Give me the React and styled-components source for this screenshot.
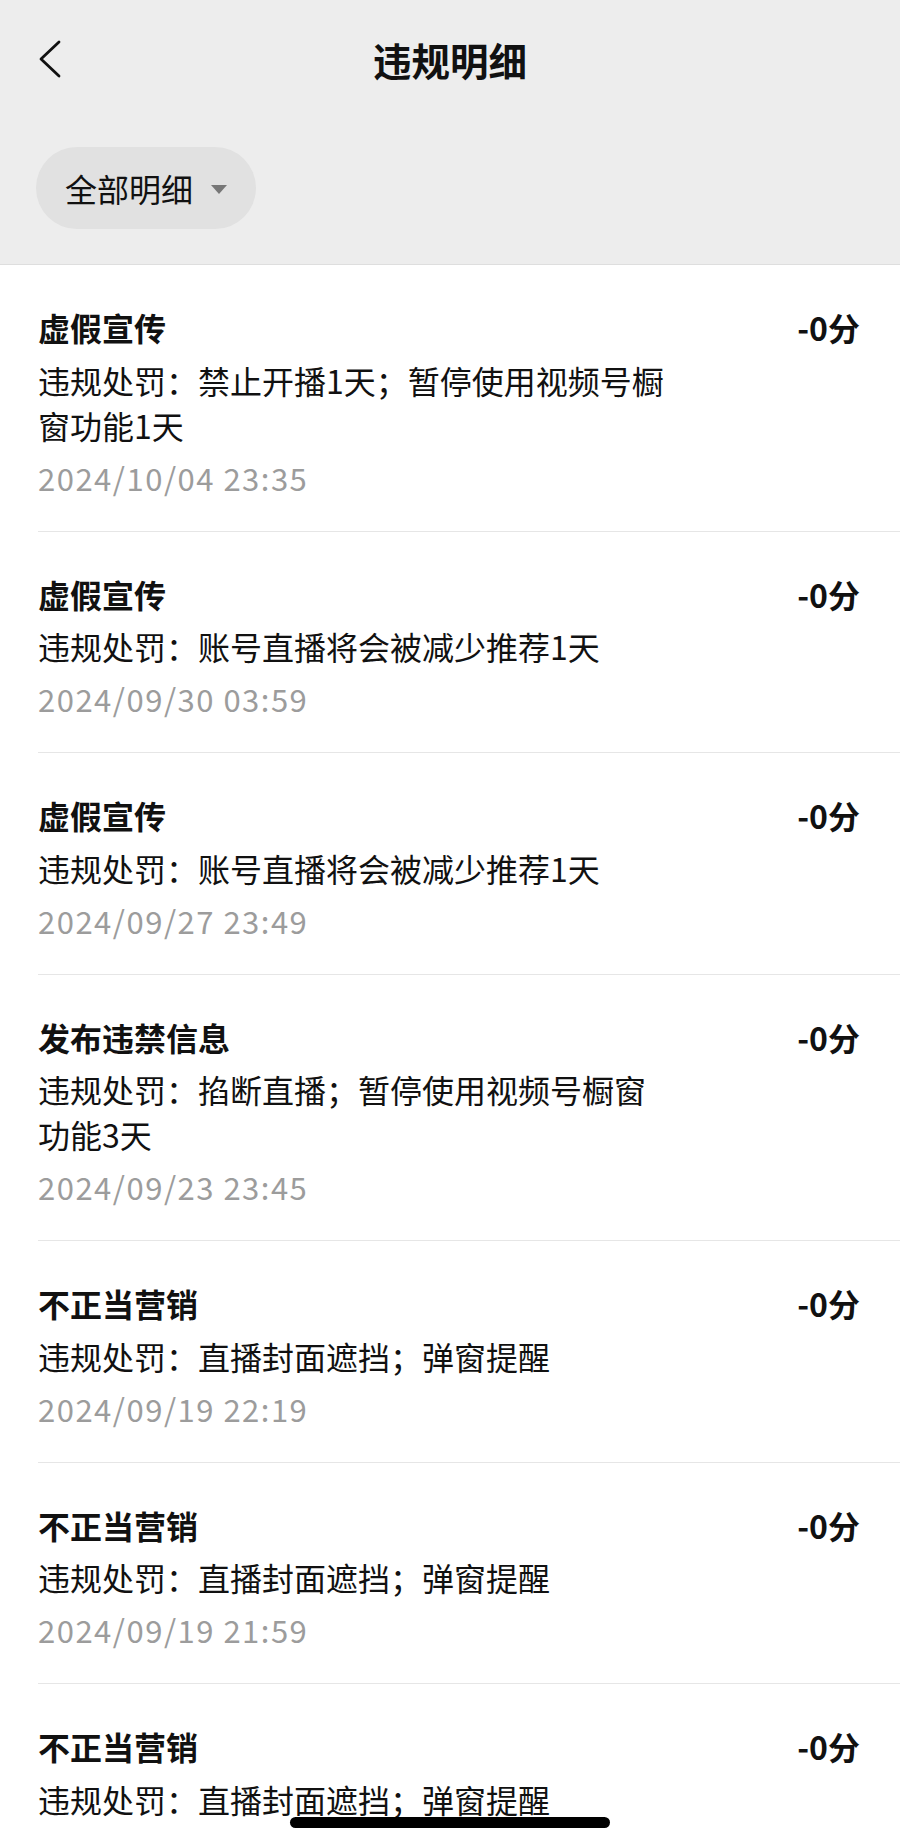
import React from "react";
import styled, { createGlobalStyle } from "styled-components";

const records = [
  {
    title: "虚假宣传",
    detail: "违规处罚：禁止开播1天；暂停使用视频号橱窗功能1天",
    time: "2024/10/04 23:35",
  },
  {
    title: "虚假宣传",
    detail: "违规处罚：账号直播将会被减少推荐1天",
    time: "2024/09/30 03:59",
  },
  {
    title: "虚假宣传",
    detail: "违规处罚：账号直播将会被减少推荐1天",
    time: "2024/09/27 23:49",
  },
  {
    title: "发布违禁信息",
    detail: "违规处罚：掐断直播；暂停使用视频号橱窗功能3天",
    time: "2024/09/23 23:45",
  },
  {
    title: "不正当营销",
    detail: "违规处罚：直播封面遮挡；弹窗提醒",
    time: "2024/09/19 22:19",
  },
  {
    title: "不正当营销",
    detail: "违规处罚：直播封面遮挡；弹窗提醒",
    time: "2024/09/19 21:59",
  },
  {
    title: "不正当营销",
    detail: "违规处罚：直播封面遮挡；弹窗提醒",
    time: "2024/09/19 21:40",
  },
];

const App = () => (
  <>
    <GlobalStyle />
    <Page>
      <Header>
        <NavBar>
          <BackButton aria-label="返回">
            <svg width="26" height="40" viewBox="0 0 26 40">
              <polyline
                points="22,3 4,20 22,37"
                fill="none"
                stroke="#111"
                strokeWidth="2.8"
                strokeLinecap="round"
                strokeLinejoin="round"
              />
            </svg>
          </BackButton>
          <NavTitle>违规明细</NavTitle>
        </NavBar>
        <FilterBar>
          <FilterPill>
            全部明细
            <Caret />
          </FilterPill>
        </FilterBar>
      </Header>
      <List>
        {records.map((r, i) => (
          <Item key={i} last={i === records.length - 1}>
            <TopRow>
              <ItemTitle>{r.title}</ItemTitle>
              <Score>-0分</Score>
            </TopRow>
            <Detail>{r.detail}</Detail>
            <Time>{r.time}</Time>
          </Item>
        ))}
      </List>
      <HomeIndicator />
    </Page>
  </>
);

//CSS

const GlobalStyle = createGlobalStyle`
  html, body {
    margin: 0;
    padding: 0;
    background: #ffffff;
    overflow: hidden;
  }
  body {
    font-family: "Noto Sans CJK SC", "Noto Sans", sans-serif;
    color: #111111;
  }
`;

const Page = styled.div`
  width: 900px;
  height: 1840px;
  overflow: hidden;
  position: relative;
  background: #ffffff;
`;

const Header = styled.div`
  background: #ededed;
  border-bottom: 1px solid #dedede;
`;

const NavBar = styled.div`
  height: 118px;
  display: grid;
  grid-template-columns: 120px 1fr 120px;
  align-items: center;
`;

const BackButton = styled.div`
  padding-left: 37px;
  display: flex;
  align-items: center;
`;

const NavTitle = styled.h1`
  margin: 0;
  text-align: center;
  font-size: 38.5px;
  font-weight: 600;
  color: #111;
`;

const FilterBar = styled.div`
  padding: 29px 36px 35px;
  display: flex;
`;

const FilterPill = styled.div`
  height: 82px;
  padding: 0 29px 0 29px;
  border-radius: 41px;
  background: #e1e1e1;
  display: flex;
  align-items: center;
  gap: 18px;
  font-size: 32px;
  color: #111;
`;

const Caret = styled.span`
  width: 0;
  height: 0;
  border-left: 8px solid transparent;
  border-right: 8px solid transparent;
  border-top: 9px solid #777;
  margin-top: 3px;
`;

const List = styled.div``;

const Item = styled.div`
  margin-left: 38px;
  padding: 38px 40px 31px 0;
  border-bottom: ${(props) => (props.last ? "none" : "1px solid #e6e6e6")};
`;

const TopRow = styled.div`
  display: flex;
  justify-content: space-between;
  align-items: center;
  height: 48px;
`;

const ItemTitle = styled.div`
  font-size: 32px;
  font-weight: 700;
`;

const Score = styled.div`
  font-size: 32px;
  font-weight: 700;
`;

const Detail = styled.div`
  margin-top: 6.5px;
  max-width: 636px;
  font-size: 32px;
  line-height: 45px;
  color: #111;
`;

const Time = styled.div`
  margin-top: 7px;
  font-size: 31px;
  line-height: 45px;
  letter-spacing: 1.5px;
  color: #9c9c9c;
`;

const HomeIndicator = styled.div`
  position: absolute;
  left: 50%;
  bottom: 12px;
  transform: translateX(-50%);
  width: 320px;
  height: 11px;
  border-radius: 6px;
  background: #000;
`;

export default App;
